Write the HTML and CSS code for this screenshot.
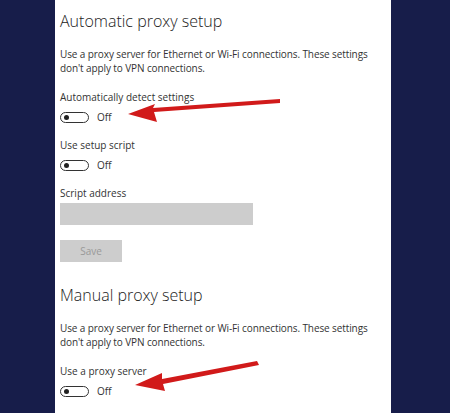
FILE: index.html
```html
<!DOCTYPE html>
<html lang="en">
<head>
    <meta charset="UTF-8">
    <title>Proxy</title>
    <link rel="stylesheet" href="styles.css">
</head>
<body>

<div class="panel">
    <h2>Automatic proxy setup</h2>
    <p class="desc">Use a proxy server for Ethernet or Wi-Fi connections. These settings<br>don't apply to VPN connections.</p>

    <div class="setting">
        <div class="label">Automatically detect settings</div>
        <div class="toggle-row"><span class="toggle"></span><span>Off</span></div>
    </div>

    <div class="setting">
        <div class="label">Use setup script</div>
        <div class="toggle-row"><span class="toggle"></span><span>Off</span></div>
    </div>

    <div class="setting">
        <div class="label">Script address</div>
        <div class="input"></div>
    </div>

    <div class="btn-save">Save</div>

    <h2 class="second">Manual proxy setup</h2>
    <p class="desc">Use a proxy server for Ethernet or Wi-Fi connections. These settings<br>don't apply to VPN connections.</p>

    <div class="setting">
        <div class="label">Use a proxy server</div>
        <div class="toggle-row"><span class="toggle"></span><span>Off</span></div>
    </div>
</div>

<!-- flechas rojas -->
<svg class="arrows" width="450" height="413" viewBox="0 0 450 413">
    <polygon fill="#d11a1a" points="280,99 280,103 154,112 157,122 128,114 155,104 153,108"/>
    <polygon fill="#d11a1a" points="257,361 259,365 163,384 165,391 135,385 162,373 162,379"/>
</svg>

</body>
</html>
```
FILE: styles.css
```css
body {
    margin: 0;
    background-color: #171d4a;
    font-family: "Open Sans", sans-serif;
    color: #333;
    position: relative;
    height: 413px;
    overflow: hidden;
}

.panel {
    margin-left: 55px;
    width: 331px;
    height: 413px;
    background-color: #fff;
    padding-left: 5px;
}

h2 {
    margin: 0;
    padding-top: 9px;
    font-weight: 300;
    font-size: 16px;
    line-height: 24px;
    color: #222;
}

h2.second {
    padding-top: 0;
    margin-top: 21px;
}

.desc {
    margin: 14px 0 0;
    font-size: 10px;
    line-height: 14px;
    letter-spacing: -0.1px;
}

.setting {
    margin-top: 15px;
}

.label {
    font-size: 10px;
    line-height: 14px;
}

.toggle-row {
    display: flex;
    align-items: center;
    gap: 8px;
    margin-top: 7px;
    font-size: 10px;
    height: 12px;
}

.toggle {
    width: 27px;
    height: 9px;
    border: 1.5px solid #333;
    border-radius: 7px;
    position: relative;
}

.toggle::after {
    content: "";
    position: absolute;
    left: 3px;
    top: 2px;
    width: 5px;
    height: 5px;
    border-radius: 50%;
    background-color: #222;
}

.input {
    margin-top: 3px;
    width: 193px;
    height: 22px;
    background-color: #cdcdcd;
}

.btn-save {
    margin-top: 15px;
    width: 62px;
    height: 22px;
    background-color: #cdcdcd;
    color: #999;
    font-size: 10px;
    line-height: 22px;
    text-align: center;
}

.arrows {
    position: absolute;
    left: 0;
    top: 0;
}
```
